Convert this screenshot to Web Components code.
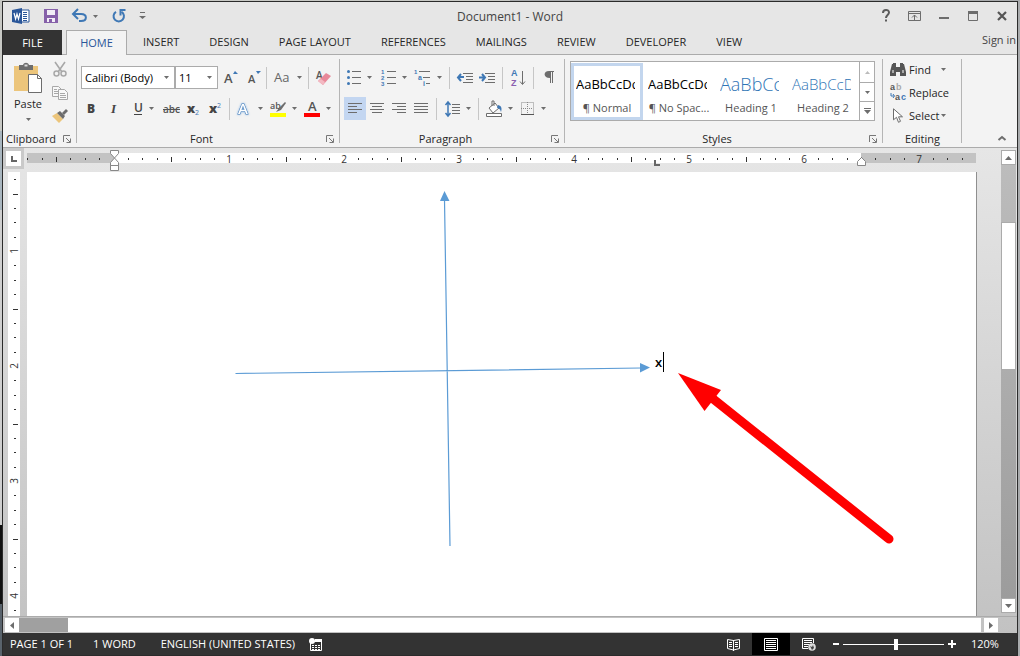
<!DOCTYPE html>
<html lang="en">
<head>
<meta charset="utf-8">
<title>Document1 - Word</title>
<style>
html, body { height: 100%; margin: 0; }
body {
  box-sizing: border-box;
  padding: 1px 2px 0 2px;
  font: 11px/16px "Open Sans", "Noto Sans", sans-serif;
  color: #262626;
  background:
    linear-gradient(90deg, transparent 50%, #a9abad 50%),
    linear-gradient(#c8c9c5 0 20%, #a9b6bf 20% 32%, #cfcfcf 32% 80%, #111 80% 92%, #59636c 92%);
}
</style>
</head>
<body>
<word-window></word-window>

<script>
/* Icon shapes, keyed by name: [width, height, markup]. */
const G = '#6d6d6d', B = '#3f78b5';
const rows = (xs, c = G) => xs.map(([x, y, w]) => `<rect x="${x}" y="${y}" width="${w}" height="1" fill="${c}"/>`).join('');
const glyph = (s, x, y, size, fill, extra = '') =>
  `<text x="${x}" y="${y}" font-size="${size}" fill="${fill}" ${extra}>${s}</text>`;
const TINY = 'font-weight="700" font-family="Liberation Sans"';
const ICONS = {
  word: [18, 16, `<path d="M9 2h8v12H9z" fill="#fff" stroke="#2a5699"/>${rows([[11,4,4],[11,6,4],[11,8,4],[11,10,4],[11,12,4]], '#2a5699')}<path d="M0 2l10-2v16L0 14z" fill="#2a5699"/><path d="M2 5l1.600 6L5 6l1.500 5L8 5" fill="none" stroke="#fff" stroke-width="1.200"/>`],
  save: [14, 14, `<path d="M0 0h14v14H0z" fill="#8660a9"/><path d="M3 1h8v5H3z" fill="#f2eef6"/><path d="M3 9h8v4H3z" fill="#f2eef6"/><path d="M5 10h3v3H5z" fill="#8660a9"/>`],
  undo: [16, 14, `<path d="M1 5h8c6.500 0 6.500 7 0 7H7" fill="none" stroke="${B}" stroke-width="2"/><path d="M6 0L1 5l5 5" fill="none" stroke="${B}" stroke-width="2"/>`],
  redo: [14, 14, `<path d="M9.500 2.800A5.200 5.200 0 1 1 4 2.800" fill="none" stroke="${B}" stroke-width="2"/><path d="M8.500 6.500V1h5" fill="none" stroke="${B}" stroke-width="2"/>`],
  customize: [7, 8, `<path d="M1 0h5v1H1z" fill="${G}"/><path d="M0 4h7L3.500 7z" fill="${G}"/>`],
  help: [10, 14, `<path d="M2 4c0-4 6-4 6-.5C8 6 5 6 5 9" fill="none" stroke="#5c5c5c" stroke-width="2"/><path d="M4 10.500h2v2H4z" fill="#5c5c5c"/>`],
  ribbonOpts: [14, 12, `<path d="M.5 1.500h12v9H.5zM.5 3.500h12M6.500 10V5M4 7.500L6.500 5 9 7.500" fill="none" stroke="${G}"/>`],
  min: [10, 12, `<path d="M0 7h10v2H0z" fill="${G}"/>`],
  max: [10, 11, `<path d="M.5.500h9v9h-9z" fill="none" stroke="${G}"/><path d="M0 0h10v3H0z" fill="${G}"/>`],
  close: [10, 10, `<path d="M1 1l8 8M9 1L1 9" stroke="#555" stroke-width="2.200"/>`],
  caret: [5, 3, `<path d="M0 0h5L2.500 3z" fill="${G}"/>`],
  paste: [29, 31, `<path d="M0 3h24v25H0z" fill="#ecc57b"/><path d="M5 2h4c1-3 5-3 6 0h4v5H5z" fill="${G}"/><path d="M10.500 1.500h3v2h-3z" fill="#ddd"/><path d="M14.500 11.500h9l4 4v14h-13z" fill="#fff" stroke="${G}"/><path d="M23.500 11.500v4h4" fill="none" stroke="${G}"/>`],
  cut: [14, 15, `<path d="M2 0l7 10M12 0L5 10" stroke="#a8a8a8" stroke-width="1.600"/><circle cx="3.500" cy="11.500" r="2.500" fill="none" stroke="#a8a8a8" stroke-width="1.500"/><circle cx="10.500" cy="11.500" r="2.500" fill="none" stroke="#a8a8a8" stroke-width="1.500"/>`],
  copy: [16, 14, `<path d="M.5.500h6l3 3v7h-9z" fill="#f8f8f8" stroke="#a8a8a8"/><path d="M6.500 3.500h6l3 3v7h-9z" fill="#f8f8f8" stroke="#a8a8a8"/>${rows([[2,3,3],[2,5,4],[2,7,4],[8,7,5],[8,9,6],[8,11,6]], '#a8a8a8')}`],
  painter: [16, 14, `<path d="M0 7l5-3 6 6-4 4z" fill="#ecc57b"/><path d="M5 4l3-2 5 5-2 3z" fill="${G}"/><path d="M10 4l4-4 2 2-4 4z" fill="${G}"/>`],
  launcher: [8, 8, `<path d="M.5 7V.500H7M3 3l4 4M7.500 3.500v4h-4" fill="none" stroke="#777"/>`],
  grow: [14, 16, `<path d="M9 4l2-3 3 3z" fill="${B}"/>${glyph('A', 0, 13, 13, '#555', 'font-weight="600"')}`],
  shrink: [14, 16, `<path d="M9 1h5l-3 3z" fill="${B}"/>${glyph('A', 1, 13, 11, '#555', 'font-weight="600"')}`],
  clear: [15, 16, `${glyph('A', 0, 9, 10, '#555', 'font-weight="600"')}<path d="M2 11l8-8 5 3-8 9z" fill="#e8899a"/><path d="M2 11l3-2 4 3-2 3z" fill="#f3b9c2"/>`],
  caseAa: [17, 16, glyph('Aa', 0, 12, 13, '#666')],
  bold: [10, 14, glyph('B', 1, 11, 12, '#444', 'font-weight="800"')],
  italic: [10, 14, glyph('I', 3, 11, 13, '#444', 'font-weight="700" font-style="italic" font-family="Liberation Serif"')],
  underline: [10, 14, `${glyph('U', 1, 10, 12, '#444', 'font-weight="600"')}<path d="M1 12h8v1H1z" fill="#444"/>`],
  strike: [18, 14, `${glyph('abc', 0, 11, 10, '#555', 'font-weight="600"')}<path d="M0 7h17v1H0z" fill="#555"/>`],
  sub: [14, 14, `${glyph('x', 0, 11, 13, '#444', 'font-weight="800"')}${glyph('2', 8, 13, 7, B)}`],
  sup: [14, 14, `${glyph('x', 0, 11, 13, '#444', 'font-weight="800"')}${glyph('2', 8, 6, 7, B)}`],
  effects: [16, 16, `<text x="2" y="13" font-size="15" font-weight="600" fill="#fff" stroke="${B}" paint-order="stroke" style="filter: drop-shadow(0 0 1px #7fb0e4)">A</text>`],
  highlight: [16, 16, `${glyph('ab', 0, 8, 9, '#555', 'font-weight="600"')}<path d="M15 1l-6 6-3 4 5-2 5-7z" fill="${G}"/><path d="M0 12h16v4H0z" fill="#ff0"/>`],
  fontColor: [16, 16, `${glyph('A', 4, 10, 13, '#555', 'font-weight="600"')}<path d="M0 12h16v4H0z" fill="#f00"/>`],
  bullets: [14, 15, `${[1,7,13].map(y => `<circle cx="1.500" cy="${y + .5}" r="1.500" fill="${B}"/>`).join('')}${rows([[5,1,9],[5,7,9],[5,13,9]])}`],
  numbers: [15, 17, `${glyph('1', 0, 5, 6, B, TINY)}${glyph('2', 0, 11, 6, B, TINY)}${glyph('3', 0, 17, 6, B, TINY)}${rows([[6,2,9],[6,8,9],[6,14,9]])}`],
  multilevel: [17, 17, `${glyph('1', 0, 5, 6, B, TINY)}${glyph('a', 4, 11, 7, B, TINY)}${glyph('i', 9, 17, 7, B, TINY)}${rows([[5,2,11],[9,8,7],[12,14,4]])}`],
  outdent: [16, 12, `<path d="M7 5H1M4 2L1 5.500 4 9" fill="none" stroke="${B}" stroke-width="2"/>${rows([[6,1,10],[9,4,7],[9,7,7],[6,10,10]])}`],
  indent: [16, 12, `<path d="M0 5.500h6M3 2l3 3.500L3 9" fill="none" stroke="${B}" stroke-width="2"/>${rows([[6,1,10],[9,4,7],[9,7,7],[6,10,10]])}`],
  sort: [14, 16, `${glyph('A', 0, 6, 9, B, TINY)}${glyph('Z', 0, 16, 9, '#8a5fb0', TINY)}<path d="M11.500 1v13M9 11.500l2.500 3 2.500-3" fill="none" stroke="${G}"/>`],
  pilcrow: [11, 13, `<path d="M5 0h5v1H9v11H8V1H7v11H6V7C-1 7-1 0 5 0z" fill="${G}"/>`],
  left: [14, 12, rows([[0,0,14],[0,3,9],[0,6,14],[0,9,9]])],
  center: [14, 12, rows([[0,0,14],[2,3,10],[0,6,14],[2,9,10]])],
  right: [14, 12, rows([[0,0,14],[5,3,9],[0,6,14],[5,9,9]])],
  justify: [14, 12, rows([[0,0,14],[0,3,14],[0,6,14],[0,9,14]])],
  spacing: [15, 16, `<path d="M3 1v14M.5 4L3 1l2.500 3M.5 12L3 15l2.500-3" fill="none" stroke="${B}" stroke-width="1.500"/>${rows([[7,3,8],[7,6,8],[7,9,8],[7,12,8]])}`],
  shading: [16, 16, `<path d="M3 7l6-5 4 5-6 5zM6 5V0h2v5" fill="#fff" stroke="${G}"/><path d="M12 4c4 1 4 4 3 7-1-3-2-4-4-4z" fill="${B}"/><path d="M.5 12.500h15v3H.5z" fill="#fff" stroke="${G}"/>`],
  borders: [14, 14, `<path d="M.5.500h12v12H.500zM6.500 0v12M0 6.500h12" fill="none" stroke="#888" stroke-dasharray="1 1"/><path d="M0 12h13v1H0z" fill="#555"/>`],
  find: [16, 14, `<path d="M2 1h4v3h4V1h4l2 8v4h-6V9H6v4H0V9z" fill="#555"/><path d="M3 0h3v2H3zM10 0h3v2h-3z" fill="#555"/><path d="M2 7h2v3H2zM12 7h2v3h-2z" fill="#aaa"/>`],
  replace: [17, 17, `${glyph('a', 0, 6, 9, '#555', TINY)}${glyph('b', 6, 6, 9, '#aaa', TINY)}${glyph('a', 5, 16, 9, '#555', TINY)}${glyph('c', 11, 16, 9, B, TINY)}<path d="M1 9v3h3M3 10l1.500 2L3 14" fill="none" stroke="${B}"/>`],
  select: [10, 16, `<path d="M.5.800v11l3-2.500 2 5 2-1-2-4.500h4z" fill="#fff" stroke="${G}"/>`],
  collapse: [8, 5, `<path d="M.5 4L4 1l3.500 3" fill="none" stroke="${G}" stroke-width="2"/>`],
  up: [7, 4, `<path d="M0 4h7L3.500 0z" fill="${G}"/>`],
  upOff: [5, 3, `<path d="M0 3h5L2.500 0z" fill="#bbb"/>`],
  more: [7, 6, `<path d="M0 0h7v1H0zM0 2h7L3.500 6z" fill="${G}"/>`],
  down: [7, 4, `<path d="M0 0h7L3.500 4z" fill="${G}"/>`],
  back: [4, 7, `<path d="M4 0v7L0 3.500z" fill="${G}"/>`],
  forth: [4, 7, `<path d="M0 0v7l4-3.500z" fill="${G}"/>`],
  macro: [13, 13, `<path d="M1.500 3.500h11v9h-11z" fill="#333" stroke="#fff"/><path d="M6 1h7v3H6z" fill="#fff"/><circle cx="3" cy="3" r="3" fill="#fff"/>${rows([[3,7,2],[6,7,2],[9,7,2],[3,9,2],[6,9,2],[9,9,2],[3,11,2],[6,11,2],[9,11,2]], '#fff')}`],
  read: [13, 13, `<path d="M.5 1.500l6 1 6-1v9l-6 1.500-6-1.500zM6.500 2v11" fill="none" stroke="#fff"/>${rows([[2,4,3],[2,6,3],[2,8,3],[8,4,3],[8,6,3],[8,8,3]], '#fff')}`],
  print: [14, 13, `<path d="M.5.500h13v12H.500z" fill="none" stroke="#fff"/>${rows([[2,2,10],[2,4,10],[2,6,10],[2,8,10],[2,10,10]], '#fff')}`],
  web: [14, 13, `<path d="M11.500 5V.500H.500v10H6" fill="none" stroke="#fff"/>${rows([[2,2,8],[2,4,8],[2,6,5],[2,8,4]], '#fff')}<circle cx="10" cy="9" r="3.800" fill="#ddd"/><path d="M8 8l2 1 1-2 1 3-2 2z" fill="#444"/>`],
  minus: [6, 6, `<path d="M0 2h6v2H0z" fill="#fff"/>`],
  plus: [8, 8, `<path d="M0 3h8v2H0zM3 0h2v8H3z" fill="#fff"/>`]
};
const icon = n => {
  const [w, h, body] = ICONS[n];
  return `<svg width="${w}" height="${h}" viewBox="0 0 ${w} ${h}" aria-hidden="true">${body}</svg>`;
};

const RESET = `
  :host { display: block; box-sizing: border-box; }
  * { box-sizing: border-box; }
  svg { display: block; flex: none; overflow: visible; }
  button { font: inherit; color: inherit; background: none; border: 0; padding: 0; margin: 0; }
`;
function define(name, css, html) {
  customElements.define(name, class extends HTMLElement {
    constructor() {
      super();
      const root = this.attachShadow({ mode: 'open' });
      root.innerHTML = `<style>${RESET}${css}</style>${typeof html === 'function' ? '' : html}`;
    }
    connectedCallback() {
      if (typeof html === 'function' && !this.ready) {
        this.ready = true;
        this.shadowRoot.innerHTML += html(this);
      }
    }
  });
}

/* An icon button; "menu" adds the drop-down caret, "w" sets its cell width. */
define('tool-button', `
  :host { flex: none; }
  button { display: flex; align-items: center; justify-content: center; gap: 6px; width: 100%; height: 100%; }
  :host([pressed]) { background: #c3d6f1; }
`, el => `<style>:host { width: ${el.getAttribute('w')}px; height: 23px; }</style>
  <button aria-label="${el.getAttribute('icon')}">${icon(el.getAttribute('icon'))}${el.hasAttribute('menu') ? icon('caret') : ''}</button>`);

define('tool-sep', `
  :host { flex: none; height: 22px; display: flex; justify-content: center; }
  i { width: 1px; background: #c6c6c6; }
`, el => `<style>:host { width: ${el.getAttribute('w')}px; }</style><i></i>`);

define('title-bar', `
  :host { display: grid; grid-template-columns: 1fr auto 1fr; align-items: center; height: 28px; }
  .quick, .frame { display: flex; align-items: center; }
  .quick { padding-left: 9px; }
  .quick button { display: flex; align-items: center; justify-content: center; gap: 5px; height: 20px; }
  .frame { justify-content: flex-end; padding-right: 1px; }
  .frame button { display: flex; justify-content: center; width: 29px; }
  h1 { margin: 0; padding-top: 2px; font-size: 12px; line-height: 16px; font-weight: 400; color: #444; }
  .a { width: 18px; } .b { width: 41px; } .c { width: 27px; } .d { width: 41px; } .e { width: 7px; }
`, `
  <div class="quick">
    <button class="a" aria-label="Word">${icon('word')}</button>
    <button class="b" aria-label="Save">${icon('save')}</button>
    <button class="c" aria-label="Undo">${icon('undo')}${icon('caret')}</button>
    <button class="d" aria-label="Repeat">${icon('redo')}</button>
    <button class="e" aria-label="Customize">${icon('customize')}</button>
  </div>
  <h1>Document1 - Word</h1>
  <div class="frame">
    <button aria-label="Help">${icon('help')}</button>
    <button aria-label="Ribbon options">${icon('ribbonOpts')}</button>
    <button aria-label="Minimize">${icon('min')}</button>
    <button aria-label="Maximize">${icon('max')}</button>
    <button aria-label="Close">${icon('close')}</button>
  </div>`);

define('ribbon-tabs', `
  :host { display: flex; height: 25px; border-bottom: 1px solid #ababab; }
  button { height: 24px; padding: 0 14px; white-space: nowrap; font-size: 11px; flex: none; }
  .file { width: 59px; height: 25px; background: #333; color: #fff; margin-right: 2px; }
  .on { height: 25px; padding: 0; width: 61px; background: #f3f3f3; border: 1px solid #ababab; border-bottom: 0; color: #2a5699; }
  a { margin-left: auto; padding-right: 1px; color: #444; text-decoration: none; line-height: 20px; white-space: nowrap; }
  nav { display: flex; height: 25px; gap: 2px; }
`, `
  <nav role="tablist">
    <button class="file">FILE</button>
    <button class="on" role="tab" aria-selected="true">HOME</button>
    <button role="tab">INSERT</button><button role="tab">DESIGN</button>
    <button role="tab">PAGE LAYOUT</button><button role="tab">REFERENCES</button>
    <button role="tab">MAILINGS</button><button role="tab">REVIEW</button>
    <button role="tab">DEVELOPER</button><button role="tab">VIEW</button>
  </nav>
  <a href="#signin">Sign in</a>`);

/* A ribbon section: slotted controls over a caption and optional launcher. */
define('ribbon-group', `
  :host { display: flex; flex-direction: column; justify-content: space-between; flex: none; padding: 3px 1px 0; position: relative; }
  :host::after { content: ""; position: absolute; right: 0; top: 4px; bottom: 4px; width: 1px; background: #b5b5b5; }
  footer { display: grid; grid-template-columns: 1fr; align-items: center; height: 17px; text-align: center; margin: 0 2px; }
  footer span { white-space: nowrap; }
  footer button { display: grid; place-items: center; }
  :host([launcher]) footer { grid-template-columns: 1fr 14px; }
  :host([tight]) footer { text-align: left; }
`, el => `<style>:host { width: ${el.getAttribute('w')}px; }</style>
  <slot></slot>
  <footer><span>${el.getAttribute('caption')}</span>${el.hasAttribute('launcher') ? `<button aria-label="${el.getAttribute('caption')} settings">${icon('launcher')}</button>` : ''}</footer>`);

define('tool-rows', `
  :host { display: grid; gap: 8px; padding-top: 8px; padding-left: var(--inset, 1px); }
  div { display: flex; align-items: center; height: 23px; }
`, `<div><slot name="top"></slot></div><div><slot name="bottom"></slot></div>`);

define('combo-box', `
  :host { position: relative; flex: none; height: 23px; border: 1px solid #ababab; background: #fff; }
  select { appearance: none; width: 100%; height: 100%; border: 0; background: none; padding: 0 0 0 3px; font: inherit; color: #000; }
  svg { position: absolute; right: 5px; top: 9px; pointer-events: none; }
`, el => `<style>:host { width: ${el.getAttribute('w')}px; }</style>
  <select aria-label="${el.getAttribute('label')}"><option>${el.getAttribute('value')}</option></select>${icon('caret')}`);

define('clipboard-tools', `
  :host { display: flex; padding-left: 3px; }
  .paste { display: grid; justify-items: center; align-content: start; width: 42px; padding-top: 5px; }
  .paste span { line-height: 15px; padding-top: 2px; }
  .paste .c { padding: 7px 0; }
  .side { display: grid; grid-auto-rows: 23px; width: 22px; }
  .side button { display: grid; place-items: center; }
`, `
  <button class="paste">${icon('paste')}<span>Paste</span><i class="c">${icon('caret')}</i></button>
  <div class="side">
    <button aria-label="Cut">${icon('cut')}</button>
    <button aria-label="Copy">${icon('copy')}</button>
    <button aria-label="Format painter">${icon('painter')}</button>
  </div>`);

define('style-card', `
  :host { width: 72px; height: 57px; flex: none; }
  button { display: grid; align-content: end; width: 100%; height: 100%; padding: 0 2px; border: 3px solid transparent; }
  :host([selected]) button { border-color: #c3d6ee; }
  .sample { width: 59px; height: 24px; line-height: 24px; margin-bottom: 3px; overflow: hidden; white-space: nowrap; text-align: left; color: #000; }
  .h { color: #2e74b5; font-weight: 300; }
  .name { white-space: nowrap; color: #555; line-height: 18px; height: 18px; margin: 0 -2px; text-align: center; }
`, el => `<style>.sample { font-size: ${el.getAttribute('size')}px; }</style>
  <button><span class="sample ${el.hasAttribute('heading') ? 'h' : ''}">${el.getAttribute('sample')}</span><span class="name"><slot></slot></span></button>`);

define('style-gallery', `
  :host { display: flex; height: 60px; margin: 3px 7px 0 4px; border: 1px solid #ababab; background: #fff; }
  .cards { display: flex; flex: 1; padding-top: 1px; }
  .nav { display: grid; grid-template-rows: 20px 19px 19px; width: 15px; border-left: 1px solid #ababab; }
  .nav button { display: grid; place-items: center; }
  .nav button + button { border-top: 1px solid #ababab; }
`, `
  <div class="cards">
    <style-card selected sample="AaBbCcDd" size="13">¶ Normal</style-card>
    <style-card sample="AaBbCcDd" size="13">¶ No Spac...</style-card>
    <style-card heading sample="AaBbCc" size="18">Heading 1</style-card>
    <style-card heading sample="AaBbCcD" size="15">Heading 2</style-card>
  </div>
  <div class="nav">
    <button aria-label="Scroll up">${icon('upOff')}</button>
    <button aria-label="Scroll down">${icon('caret')}</button>
    <button aria-label="More styles">${icon('more')}</button>
  </div>`);

define('edit-tools', `
  :host { display: grid; grid-auto-rows: 23px; padding-left: 5px; }
  button { display: grid; grid-template-columns: 20px auto auto; align-items: center; justify-content: start; }
  button svg:first-child { justify-self: center; margin-right: 2px; }
  .far { margin-left: 10px; } .near { margin-left: 2px; }
`, `
  <button>${icon('find')}<span>Find</span><i class="far">${icon('caret')}</i></button>
  <button>${icon('replace')}<span>Replace</span></button>
  <button>${icon('select')}<span>Select</span><i class="near">${icon('caret')}</i></button>`);

define('word-ribbon', `
  :host { display: flex; height: 93px; background: #f3f3f3; border-bottom: 1px solid #ababab; }
  .fold { margin-left: auto; align-self: flex-end; padding: 0 11px 6px 0; }
  tool-rows.font { --inset: 3px; }
`, `
  <ribbon-group w="74" caption="Clipboard" launcher tight><clipboard-tools></clipboard-tools></ribbon-group>
  <ribbon-group w="263" caption="Font" launcher>
    <tool-rows class="font">
      <combo-box slot="top" w="94" label="Font" value="Calibri (Body)"></combo-box>
      <combo-box slot="top" w="43" label="Font size" value="11"></combo-box>
      <tool-button slot="top" w="25" icon="grow"></tool-button>
      <tool-button slot="top" w="21" icon="shrink"></tool-button>
      <tool-sep slot="top" w="5"></tool-sep>
      <tool-button slot="top" w="37" icon="caseAa" menu></tool-button>
      <tool-sep slot="top" w="5"></tool-sep>
      <tool-button slot="top" w="25" icon="clear"></tool-button>
      <tool-button slot="bottom" w="20" icon="bold"></tool-button>
      <tool-button slot="bottom" w="23" icon="italic"></tool-button>
      <tool-button slot="bottom" w="38" icon="underline" menu></tool-button>
      <tool-button slot="bottom" w="20" icon="strike"></tool-button>
      <tool-button slot="bottom" w="24" icon="sub"></tool-button>
      <tool-button slot="bottom" w="20" icon="sup"></tool-button>
      <tool-sep slot="bottom" w="7"></tool-sep>
      <tool-button slot="bottom" w="33" icon="effects" menu></tool-button>
      <tool-button slot="bottom" w="35" icon="highlight" menu></tool-button>
      <tool-button slot="bottom" w="33" icon="fontColor" menu></tool-button>
    </tool-rows>
  </ribbon-group>
  <ribbon-group w="225" caption="Paragraph" launcher>
    <tool-rows>
      <tool-button slot="top" w="35" icon="bullets" menu></tool-button>
      <tool-button slot="top" w="34" icon="numbers" menu></tool-button>
      <tool-button slot="top" w="34" icon="multilevel" menu></tool-button>
      <tool-sep slot="top" w="8"></tool-sep>
      <tool-button slot="top" w="23" icon="outdent"></tool-button>
      <tool-button slot="top" w="22" icon="indent"></tool-button>
      <tool-sep slot="top" w="8"></tool-sep>
      <tool-button slot="top" w="24" icon="sort"></tool-button>
      <tool-sep slot="top" w="7"></tool-sep>
      <tool-button slot="top" w="24" icon="pilcrow"></tool-button>
      <tool-sep slot="bottom" w="2" style="visibility: hidden"></tool-sep>
      <tool-button slot="bottom" w="22" icon="left" pressed></tool-button>
      <tool-button slot="bottom" w="22" icon="center"></tool-button>
      <tool-button slot="bottom" w="22" icon="right"></tool-button>
      <tool-button slot="bottom" w="22" icon="justify"></tool-button>
      <tool-sep slot="bottom" w="9"></tool-sep>
      <tool-button slot="bottom" w="33" icon="spacing" menu></tool-button>
      <tool-sep slot="bottom" w="9"></tool-sep>
      <tool-button slot="bottom" w="33" icon="shading" menu></tool-button>
      <tool-button slot="bottom" w="34" icon="borders" menu></tool-button>
    </tool-rows>
  </ribbon-group>
  <ribbon-group w="318" caption="Styles" launcher><style-gallery></style-gallery></ribbon-group>
  <ribbon-group w="79" caption="Editing"><edit-tools></edit-tools></ribbon-group>
  <button class="fold" aria-label="Collapse the ribbon">${icon('collapse')}</button>`);

/* Rulers: 115px to the inch at 120% zoom, divided in eighths. */
const INCH = 115;
function hRuler() {
  let s = '';
  for (let e = -6; e <= 59; e++) {
    const x = Math.round(86.5 + e * INCH / 8);
    if (x < 0 || e === 0) continue;
    if (e > 0 && e % 8 === 0) s += `<text x="${x}" y="10" text-anchor="middle">${e / 8}</text>`;
    else { const h = e % 4 ? 2 : 5; s += `<rect x="${x}" y="${6 - (h >> 1)}" width="1" height="${h}"/>`; }
  }
  return s;
}
function vRuler() {
  let s = '';
  for (let e = 3; e <= 33; e++) {
    const y = Math.floor(-35.5 + e * INCH / 8);
    if (e % 8 === 0) s += `<text transform="translate(10 ${y}) rotate(-90)" text-anchor="middle">${e / 8}</text>`;
    else { const w = e % 4 ? 2 : 5; s += `<rect x="${7 - (w >> 1)}" y="${y}" width="${w}" height="1"/>`; }
  }
  return s;
}
define('ruler-bar', `
  :host { display: grid; grid-template-columns: 21px 1fr; column-gap: 3px; height: 24px; }
  .stop { display: grid; place-items: center; height: 21px; background: #c9c9c9; }
  .stop i { display: grid; place-items: center; width: 15px; height: 15px; background: #fff; }
  .track { margin-top: 5px; height: 10px; background: linear-gradient(90deg, #c3c3c3 87px, #fff 87px 834px, #c3c3c3 834px); }
  svg.scale { width: 100%; height: 10px; fill: #333; font-size: 10px; }
`, `
  <div class="stop"><i><svg width="6" height="6"><path d="M0 0h2v4h4v2H0z" fill="#666"/></svg></i></div>
  <div class="track"><svg class="scale">${hRuler()}
    <path d="M83.500-2.500h8v3l-4 4.500 4 4.500v3h-8v-3l4-4.500-4-4.500zM83.500 12.500h8v5h-8z" fill="#fff" stroke="#888"/>
    <path d="M83.500 12.500h8" stroke="#888"/>
    <path d="M627 7h2v4h4v2h-6z" fill="#666"/>
    <path d="M830.500 12.500v-4l4-4 4 4v4z" fill="#fff" stroke="#888"/></svg></div>`);

define('side-ruler', `
  :host { padding-left: 5px; }
  svg { width: 12px; height: 100%; background: #fff; fill: #333; font-size: 10px; overflow: hidden; }
`, `<svg>${vRuler()}</svg>`);

/* Document page with drawing canvas: axes, label text box and pointer arrow. */
define('doc-page', `
  :host { position: relative; background: #fff; border-right: 1px solid #8f8f8f; overflow: hidden; }
  svg { position: absolute; left: 0; top: 0; width: 100%; height: 100%; }
  .label { position: absolute; left: 628px; top: 180px; height: 20px; line-height: 20px; padding-right: 1px; font-size: 13px; font-weight: 600; color: #000; border-right: 1px solid #000; }
`, `
  <svg aria-hidden="true">
    <g stroke="#5b9bd5" stroke-width="1.200"><path d="M417.500 28L423 374M208.500 201.500L614 196"/></g>
    <path d="M417.500 19l5 10h-9.500zM623 195.500l-10-4.500v9.500z" fill="#5b9bd5"/>
    <path d="M680 222L862 367" stroke="#f00" stroke-width="9" stroke-linecap="round"/>
    <path d="M651 201l43 17-16.500 21z" fill="#f00"/>
  </svg>
  <div class="label" role="textbox" aria-label="Axis label">x</div>`);

define('scroll-v', `
  :host { display: flex; flex-direction: column; width: 15px; padding: 2px 0 3px; }
  button { display: grid; place-items: center; height: 15px; background: #fff; border: 1px solid #ababab; flex: none; }
  .track { flex: 1; display: flex; flex-direction: column; background: linear-gradient(#bcbcbc, #9c9c9c); }
  .thumb { flex: 147; background: #fff; border: 1px solid #ababab; }
  .before { flex: 58; } .after { flex: 231; }
`, `<button aria-label="Up">${icon('up')}</button><div class="track"><div class="before"></div><div class="thumb"></div><div class="after"></div></div><button aria-label="Down">${icon('down')}</button>`);

define('scroll-h', `
  :host { display: flex; height: 17px; padding: 1px 19px 1px 2px; border-top: 1px solid #ababab; }
  button { display: grid; place-items: center; width: 14px; background: #fff; flex: none; }
  .track { flex: 1; display: flex; background: #a0a0a0; margin-right: 3px; }
  .before { flex: 49; } .thumb { flex: 913; background: #fff; }
`, `<button aria-label="Left">${icon('back')}</button><div class="track"><div class="before"></div><div class="thumb"></div></div><button aria-label="Right">${icon('forth')}</button>`);

define('work-area', `
  :host { display: grid; flex: 1; min-height: 0; grid-template-columns: 24px 1fr 24px 15px 1px; grid-template-rows: 24px 1fr auto; background: linear-gradient(#e6e6e6, #c2c2c2); }
  ruler-bar { grid-area: 1 / 1 / 2 / 3; margin-right: 1px; }
  side-ruler { grid-area: 2 / 1; }
  doc-page { grid-area: 2 / 2; }
  scroll-v { grid-area: 1 / 4 / 3 / 5; }
  scroll-h { grid-area: 3 / 1 / 4 / 6; }
`, `<ruler-bar></ruler-bar><side-ruler></side-ruler><doc-page></doc-page><scroll-v></scroll-v><scroll-h></scroll-h>`);

define('status-bar', `
  :host { display: flex; align-items: center; height: 22px; padding: 0 18px 0 7px; background: #333; color: #fff; }
  .info { display: flex; align-items: center; gap: 20px; white-space: nowrap; }
  .lang { margin: 0 -6px 0 5px; }
  .views { display: flex; margin-left: auto; height: 100%; }
  .views button { display: grid; place-items: center; width: 38px; }
  .views .on { background: #000; }
  .zoom { display: flex; align-items: center; margin-left: 5px; }
  input { appearance: none; width: 101px; height: 12px; margin: 0 4px; background: linear-gradient(#fff, #fff) center / 100% 1px no-repeat; }
  input::-webkit-slider-thumb { appearance: none; width: 4px; height: 11px; background: #fff; border: 0; border-radius: 0; }
  output { margin-left: 15px; min-width: 28px; }
`, `
  <div class="info"><span>PAGE 1 OF 1</span><span>1 WORD</span><span class="lang">ENGLISH (UNITED STATES)</span><button aria-label="Record macro">${icon('macro')}</button></div>
  <div class="views">
    <button aria-label="Read mode">${icon('read')}</button>
    <button class="on" aria-label="Print layout">${icon('print')}</button>
    <button aria-label="Web layout">${icon('web')}</button>
  </div>
  <div class="zoom"><button aria-label="Zoom out">${icon('minus')}</button><input type="range" min="0" max="100" value="53" aria-label="Zoom"><button aria-label="Zoom in">${icon('plus')}</button><output>120%</output></div>`);

define('word-window', `
  :host { display: flex; flex-direction: column; height: calc(100vh - 1px); border: 1px solid #2b2b2b; background: #e6e6e6; }
  title-bar, ribbon-tabs, word-ribbon, status-bar { flex: none; }
`, `<title-bar></title-bar><ribbon-tabs></ribbon-tabs><word-ribbon></word-ribbon><work-area></work-area><status-bar></status-bar>`);
</script>
</body>
</html>
